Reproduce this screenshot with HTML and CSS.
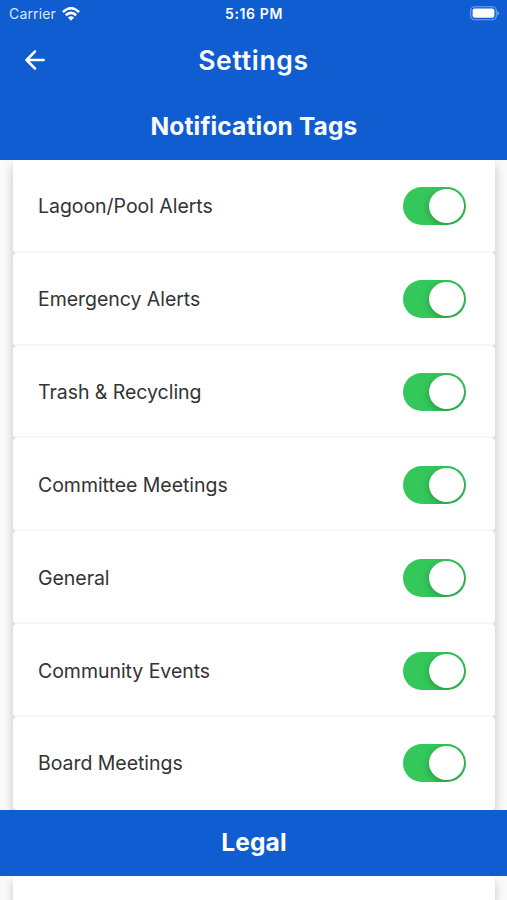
FILE: index.html
```html
<!DOCTYPE html>
<html lang="en">
<head>
<meta charset="utf-8">
<title>Settings</title>
<link rel="stylesheet" href="styles.css">
</head>
<body>
<header class="top">
  <div class="status">
    <div class="carrier"><span>Carrier</span>
      <svg class="wifi" width="18" height="14" viewBox="0 0 18 14" fill="none" stroke="#fff" stroke-width="2.5"><path d="M.9 5.1Q9-2.5 17.1 5.1M3.8 8.2Q9 3.5 14.2 8.2"/><path d="M9 13.7 5.9 10.6Q9 8 12.1 10.6Z" fill="#fff" stroke="none"/></svg>
    </div>
    <span class="time">5:16 PM</span>
    <svg class="battery" width="29" height="15" viewBox="0 0 29 15"><rect x=".7" y=".7" width="25.6" height="13" rx="4" fill="none" stroke="#fff" stroke-opacity=".45" stroke-width="1.1"/><rect x="2.6" y="2.6" width="21.8" height="9.2" rx="2" fill="#fff"/><path d="M27.4 5v4.6Q29 8.6 29 7.3T27.4 5Z" fill="#fff" fill-opacity=".45"/></svg>
  </div>
  <div class="nav">
    <svg class="back" width="20" height="20" viewBox="0 0 20 20" fill="none" stroke="#fff" stroke-width="2.5" stroke-linecap="round" stroke-linejoin="round"><path d="M18.7 10H1.8M10 1.5 1.5 10 10 18.5"/></svg>
    <h1>Settings</h1>
  </div>
</header>
<h2 class="section">Notification Tags</h2>
<main class="list">
  <div class="card"><span>Lagoon/Pool Alerts</span><i class="switch"></i></div>
  <div class="card"><span>Emergency Alerts</span><i class="switch"></i></div>
  <div class="card"><span>Trash &amp; Recycling</span><i class="switch"></i></div>
  <div class="card"><span>Committee Meetings</span><i class="switch"></i></div>
  <div class="card"><span>General</span><i class="switch"></i></div>
  <div class="card"><span>Community Events</span><i class="switch"></i></div>
  <div class="card"><span>Board Meetings</span><i class="switch"></i></div>
</main>
<h2 class="section">Legal</h2>
<div class="list partial"><div class="card"></div></div>
</body>
</html>
```
FILE: styles.css
```css
* { box-sizing: border-box; }
body {
  margin: 0;
  height: 900px;
  overflow: hidden;
  background: #fafafa;
  color: #333;
  font-family: Inter, "Liberation Sans", sans-serif;
}
h1, h2 { margin: 0; color: #fff; }
.top { height: 94px; background: #105dd1; color: #fff; }
.status {
  display: grid;
  grid-template-columns: 1fr auto 1fr;
  align-items: center;
  height: 27px;
  padding: 0 8px 0 9px;
  font-size: 14px;
}
.carrier { display: flex; align-items: center; gap: 6px; color: #d9e7fb; letter-spacing: 0.15px; }
.time { font-size: 14px; font-weight: 600; letter-spacing: 0.6px; }
.battery { justify-self: end; }
.nav {
  display: grid;
  grid-template-columns: 60px 1fr 60px;
  align-items: center;
  height: 65px;
}
.back { margin: 1px 0 0 25px; }
h1 { font-size: 26.5px; font-weight: 600; letter-spacing: 0.7px; text-align: center; }
.section {
  position: relative;
  z-index: 1;
  height: 66px;
  padding-left: 1px;
  background: #105dd1;
  font-size: 24.5px;
  font-weight: 700;
  line-height: 65px;
  letter-spacing: 0.15px;
  text-align: center;
}
.list {
  margin: 0 12.5px 0 13px;
  background: #dcdcdc;
  box-shadow: 0 6px 10px rgba(0, 0, 0, 0.22);
}
.card {
  display: flex;
  align-items: center;
  justify-content: space-between;
  height: 92.83px;
  padding: 2px 29px 0 25px;
  border-bottom: 2px solid #f7f7f7;
  border-radius: 4px;
  background: #fff;
  font-size: 19.5px;
  letter-spacing: -0.04px;
}
.card:first-child { border-top-left-radius: 0; border-top-right-radius: 0; }
.card:last-child { border-bottom-color: #fff; }
.partial { height: 24px; overflow: hidden; }
.partial .card { height: 24px; border: 0; border-radius: 0; }
.switch {
  width: 63px;
  height: 38px;
  padding: 2px;
  border-radius: 19px;
  background: #34c759;
  overflow: hidden;
}
.switch::after {
  content: "";
  display: block;
  width: 35px;
  height: 34px;
  margin-left: auto;
  border-radius: 50%;
  background: #fff;
  box-shadow: 0 2px 7px rgba(0, 0, 0, 0.26);
}
```
